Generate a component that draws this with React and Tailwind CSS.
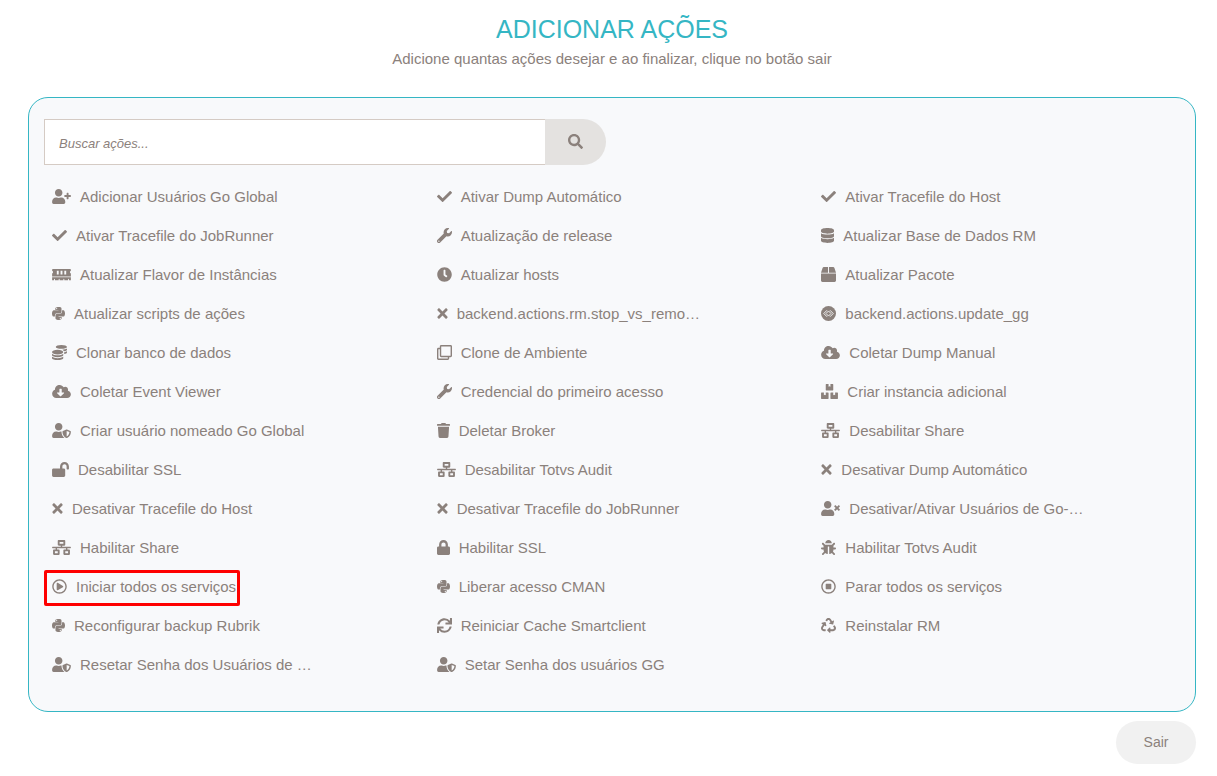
import {
    FaBox, FaBoxes, FaBug, FaCheck, FaClock, FaCloudDownloadAlt, FaCoins, FaDatabase, FaLock, FaLockOpen,
    FaMemory, FaNetworkWired, FaPython, FaRecycle, FaRegClone, FaRegPlayCircle, FaRegStopCircle, FaSearch,
    FaSync, FaTimes, FaTrash, FaUserPlus, FaUserShield, FaUserTimes, FaWrench,
} from 'react-icons/fa';

function CodeCircleIcon({ className }) {
    return (
        <svg viewBox="0 0 30 30" className={className} aria-hidden="true">
            <circle cx="15" cy="15" r="15" fill="currentColor" />
            <g fill="none" stroke="#f8f9fb" strokeWidth="1.8">
                <path d="M12 8.500 5.500 15l6.500 6.500M18 8.500l6.500 6.500-6.500 6.500" />
                <path d="M15 10 10 15l5 5 5-5z" />
            </g>
        </svg>
    );
}

// Los iconos comparten altura; el ancho depende de cada glifo
const ANCHO = {
    xs: 'w-[11px]',
    sm: 'w-[13px]',
    md: 'w-[15px]',
    lg: 'w-[17px]',
    xl: 'w-[19px]',
};

const ACOES = [
    { nome: 'Adicionar Usuários Go Global', icon: FaUserPlus, ancho: 'xl' },
    { nome: 'Ativar Dump Automático', icon: FaCheck },
    { nome: 'Ativar Tracefile do Host', icon: FaCheck },
    { nome: 'Ativar Tracefile do JobRunner', icon: FaCheck },
    { nome: 'Atualização de release', icon: FaWrench },
    { nome: 'Atualizar Base de Dados RM', icon: FaDatabase, ancho: 'sm' },
    { nome: 'Atualizar Flavor de Instâncias', icon: FaMemory, ancho: 'xl' },
    { nome: 'Atualizar hosts', icon: FaClock },
    { nome: 'Atualizar Pacote', icon: FaBox },
    { nome: 'Atualizar scripts de ações', icon: FaPython, ancho: 'sm' },
    { nome: 'backend.actions.rm.stop_vs_remo…', icon: FaTimes, ancho: 'xs' },
    { nome: 'backend.actions.update_gg', icon: CodeCircleIcon },
    { nome: 'Clonar banco de dados', icon: FaCoins },
    { nome: 'Clone de Ambiente', icon: FaRegClone },
    { nome: 'Coletar Dump Manual', icon: FaCloudDownloadAlt, ancho: 'xl' },
    { nome: 'Coletar Event Viewer', icon: FaCloudDownloadAlt, ancho: 'xl' },
    { nome: 'Credencial do primeiro acesso', icon: FaWrench },
    { nome: 'Criar instancia adicional', icon: FaBoxes, ancho: 'lg' },
    { nome: 'Criar usuário nomeado Go Global', icon: FaUserShield, ancho: 'xl' },
    { nome: 'Deletar Broker', icon: FaTrash, ancho: 'sm' },
    { nome: 'Desabilitar Share', icon: FaNetworkWired, ancho: 'xl' },
    { nome: 'Desabilitar SSL', icon: FaLockOpen, ancho: 'lg' },
    { nome: 'Desabilitar Totvs Audit', icon: FaNetworkWired, ancho: 'xl' },
    { nome: 'Desativar Dump Automático', icon: FaTimes, ancho: 'xs' },
    { nome: 'Desativar Tracefile do Host', icon: FaTimes, ancho: 'xs' },
    { nome: 'Desativar Tracefile do JobRunner', icon: FaTimes, ancho: 'xs' },
    { nome: 'Desativar/Ativar Usuários de Go-…', icon: FaUserTimes, ancho: 'xl' },
    { nome: 'Habilitar Share', icon: FaNetworkWired, ancho: 'xl' },
    { nome: 'Habilitar SSL', icon: FaLock, ancho: 'sm' },
    { nome: 'Habilitar Totvs Audit', icon: FaBug },
    { nome: 'Iniciar todos os serviços', icon: FaRegPlayCircle, destaque: true },
    { nome: 'Liberar acesso CMAN', icon: FaPython, ancho: 'sm' },
    { nome: 'Parar todos os serviços', icon: FaRegStopCircle },
    { nome: 'Reconfigurar backup Rubrik', icon: FaPython, ancho: 'sm' },
    { nome: 'Reiniciar Cache Smartclient', icon: FaSync },
    { nome: 'Reinstalar RM', icon: FaRecycle },
    { nome: 'Resetar Senha dos Usuários de …', icon: FaUserShield, ancho: 'xl' },
    { nome: 'Setar Senha dos usuários GG', icon: FaUserShield, ancho: 'xl' },
];

function Acao({ nome, icon: Icon, ancho = 'md', destaque }) {
    return (
        <li className="flex h-[39px] items-center px-[7px]">
            <button
                type="button"
                className={`flex h-9 items-center gap-[9px] rounded-xs border-3 pr-px pl-[5px] whitespace-nowrap ${destaque ? 'border-[#fe0000]' : 'border-transparent'}`}
            >
                <Icon className={`mb-0.5 h-[15px] shrink-0 ${ANCHO[ancho]}`} />
                <span>{nome}</span>
            </button>
        </li>
    );
}

export default function App() {
    return (
        <main className="bg-white pt-[11px] pr-[21px] pb-3 pl-7 font-['Liberation_Sans',Arial,sans-serif] text-[15px] text-[#8b817c]">
            <header className="text-center">
                <h1 className="text-[25px] leading-9 text-[#35b6c4]">ADICIONAR AÇÕES</h1>
                <p className="leading-6">Adicione quantas ações desejar e ao finalizar, clique no botão sair</p>
            </header>

            <section className="mt-[26px] rounded-[20px] border border-[#35b6c4] bg-[#f8f9fb] pt-[21px] pb-[26px]">
                <form className="ml-[15px] flex h-[46px] w-[562px] max-w-full" onSubmit={(e) => e.preventDefault()}>
                    <input
                        type="text"
                        aria-label="Buscar ações"
                        placeholder="Buscar ações..."
                        className="min-w-0 flex-1 border border-r-0 border-[#d5cbc4] bg-white px-3.5 pt-1 text-[13px] italic outline-none placeholder:text-[#8b817c]"
                    />
                    <button type="submit" aria-label="Buscar" className="flex w-[61px] items-center justify-center rounded-r-full bg-[#e4e2e0] pb-0.5">
                        <FaSearch className="h-[15px] w-[15px]" />
                    </button>
                </form>

                <ul className="mt-[13px] grid grid-cols-3 pr-1 pl-2">
                    {ACOES.map((acao) => <Acao key={acao.nome} {...acao} />)}
                </ul>
            </section>

            <div className="mt-[9px] flex justify-end">
                <button type="button" className="h-[43px] w-20 rounded-full bg-[#f1f1f1] text-[14px]">Sair</button>
            </div>
        </main>
    );
}
